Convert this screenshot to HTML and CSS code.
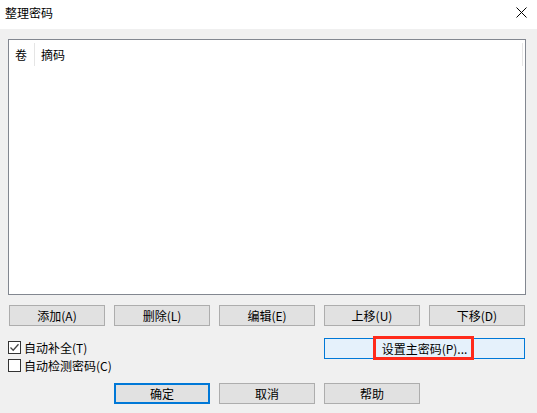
FILE: index.html
```html
<!DOCTYPE html>
<html lang="zh-CN">
<head>
  <meta charset="UTF-8" />
  <title>整理密码</title>
  <link rel="stylesheet" href="styles.css">
</head>
<body>
  <!-- Title bar -->
  <div class="titlebar">
    <span class="title">整理密码</span>
    <svg class="close" width="11" height="11" viewBox="0 0 11 11">
      <path d="M0.5 0.5 L10.5 10.5 M10.5 0.5 L0.5 10.5" stroke="#000" stroke-width="1" fill="none"/>
    </svg>
  </div>

  <div class="content">
    <!-- Password list -->
    <div class="listbox">
      <div class="list-head">
        <div class="col col-vol">卷</div>
        <div class="col col-sum">摘码</div>
      </div>
    </div>

    <div class="btn-row">
      <button class="btn">添加(A)</button>
      <button class="btn">删除(L)</button>
      <button class="btn">编辑(E)</button>
      <button class="btn">上移(U)</button>
      <button class="btn">下移(D)</button>
    </div>

    <div class="options">
      <div class="checks">
        <label class="check"><span class="box checked"><svg width="11" height="11" viewBox="0 0 11 11"><path d="M1.5 5.5 L4.2 8.2 L9.5 2.2" stroke="#444" stroke-width="1.3" fill="none"/></svg></span>自动补全(T)</label>
        <label class="check"><span class="box"></span>自动检测密码(C)</label>
      </div>
      <div class="master-wrap">
        <button class="btn btn-hover">设置主密码(P)...</button>
        <div class="mark"></div>
      </div>
    </div>

    <div class="btn-row bottom">
      <button class="btn btn-default col2">确定</button>
      <button class="btn">取消</button>
      <button class="btn">帮助</button>
    </div>
  </div>
</body>
</html>
```

FILE: styles.css
```css
html, body {
  margin: 0;
  padding: 0;
  width: 537px;
  height: 413px;
  overflow: hidden;
  background-color: #f0f0f0;
  font-family: "Noto Sans CJK SC", "Noto Sans", sans-serif;
  font-size: 12px;
  color: #000;
}

/* Title bar */
.titlebar {
  height: 29px;
  background-color: #ffffff;
  display: flex;
  align-items: center;
  justify-content: space-between;
  padding: 0 10px 0 5px;
  box-sizing: border-box;
}
.title {
  font-size: 12px;
  line-height: 14px;
  margin-top: -3px;
}
.close {
  margin-top: -5px;
}

/* Main content */
.content {
  padding: 10px 11px 0 8px;
}

.listbox {
  height: 256px;
  box-sizing: border-box;
  border: 1px solid #828790;
  background-color: #ffffff;
}
.list-head {
  display: flex;
  height: 27px;
  padding-top: 3px;
  box-sizing: border-box;
}
.col {
  display: flex;
  align-items: center;
  line-height: 14px;
  height: 23px;
  box-sizing: border-box;
}
.col-vol {
  width: 26px;
  padding-left: 6px;
  border-right: 1px solid #e5e5e5;
}
.col-sum {
  flex: 1;
  padding-left: 6px;
  border-right: 1px solid #e5e5e5;
  margin-right: 2px;
}

/* Buttons */
.btn-row {
  display: grid;
  grid-template-columns: repeat(5, 96px);
  column-gap: 9px;
  margin-top: 10px;
  padding-left: 1px;
}
.btn {
  height: 21px;
  padding: 0;
  margin: 0;
  box-sizing: border-box;
  border: 1px solid #adadad;
  background-color: #e1e1e1;
  font-family: inherit;
  font-size: 12px;
  line-height: 14px;
  color: #000;
}
.btn-hover {
  width: 100%;
  background-color: #e5f1fb;
  border-color: #0078d7;
}
.btn-default {
  border: 2px solid #0078d7;
}
.col2 {
  grid-column: 2;
}
.bottom {
  margin-top: 11px;
}

/* Options row */
.options {
  display: grid;
  grid-template-columns: 306px 201px;
  column-gap: 10px;
  margin-top: 12px;
}
.checks {
  padding-top: 3px;
  display: flex;
  flex-direction: column;
  gap: 5px;
}
.check {
  display: flex;
  align-items: center;
  height: 13px;
  line-height: 13px;
  white-space: nowrap;
}
.box {
  width: 13px;
  height: 13px;
  box-sizing: border-box;
  border: 1px solid #333;
  background-color: #fff;
  margin-right: 3px;
  display: flex;
  align-items: center;
  justify-content: center;
}
.master-wrap {
  position: relative;
  height: 21px;
}
.mark {
  position: absolute;
  left: 49px;
  top: -2px;
  width: 101px;
  height: 24px;
  box-sizing: border-box;
  border: 3px solid #ff2a1a;
}
```
